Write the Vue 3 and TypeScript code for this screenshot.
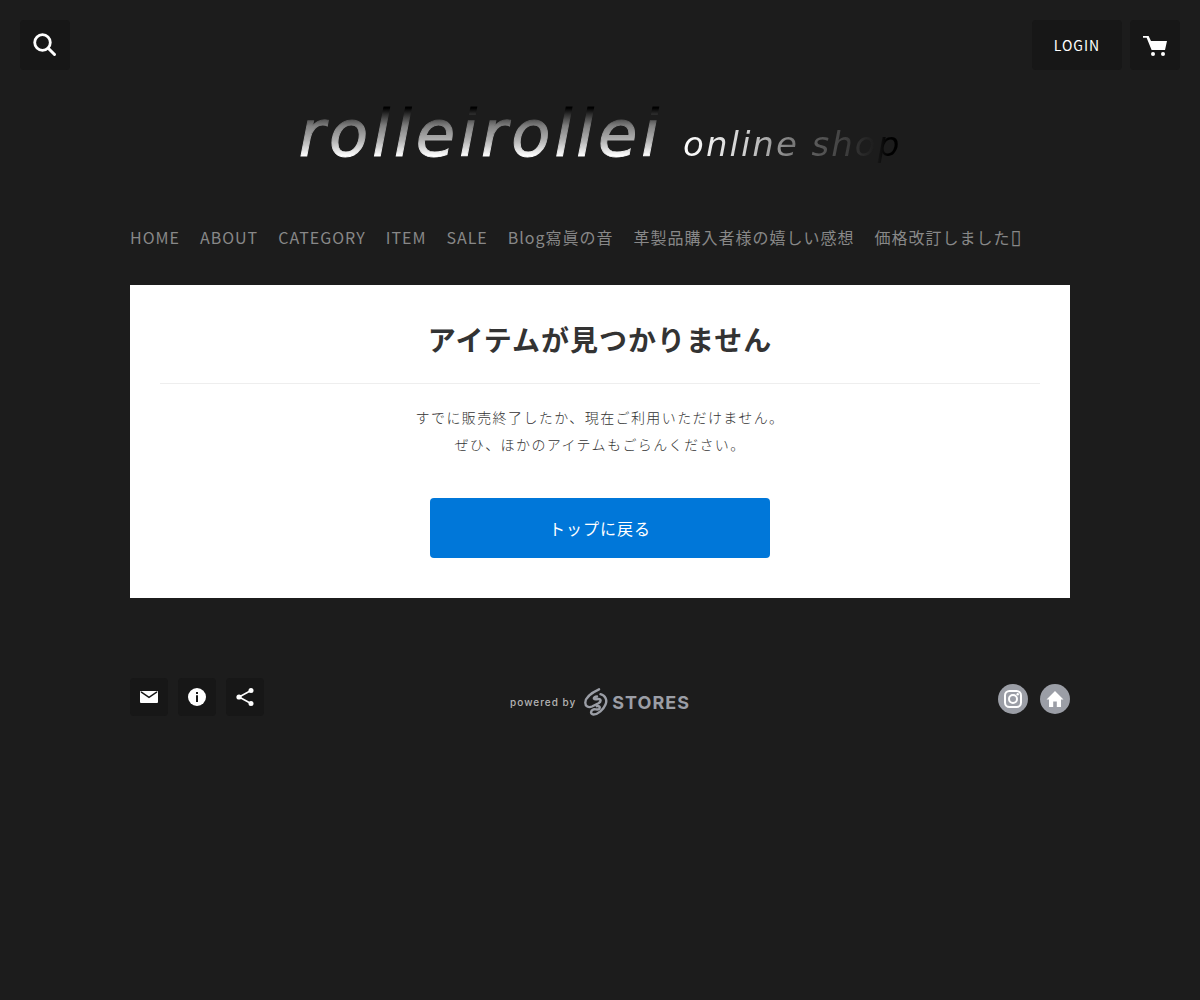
<script setup lang="ts">
interface NavItem {
  label: string
  href: string
  mark?: string
}

const navItems: NavItem[] = [
  { label: 'HOME', href: '#home' },
  { label: 'ABOUT', href: '#about' },
  { label: 'CATEGORY', href: '#category' },
  { label: 'ITEM', href: '#item' },
  { label: 'SALE', href: '#sale' },
  { label: 'Blog寫眞の音', href: '#blog' },
  { label: '革製品購入者様の嬉しい感想', href: '#voice' },
  { label: '価格改訂しました', href: '#price', mark: '▯' },
]
</script>

<template>
  <div class="page">
    <header class="toolbar">
      <button class="tile" type="button" aria-label="検索">
        <svg width="24" height="24" viewBox="0 0 24 24" fill="none" stroke="#fff" aria-hidden="true">
          <circle cx="9.5" cy="9.5" r="7.8" stroke-width="2.8" />
          <path d="M15.5 15.500L21.500 21.500" stroke-width="3" stroke-linecap="round" />
        </svg>
      </button>
      <div class="toolbar-right">
        <button class="tile login" type="button">LOGIN</button>
        <button class="tile" type="button" aria-label="カート">
          <svg width="24" height="22" viewBox="0 0 24 22" fill="#fff" aria-hidden="true">
            <path d="M0 2h5.600L8 7h16l-2 9H8.600L3.600 3.800H0z" />
            <circle cx="10" cy="20" r="2" />
            <circle cx="20" cy="20" r="2" />
          </svg>
        </button>
      </div>
    </header>

    <div class="container">
      <h1 class="brand">
        <a href="#home"><span class="brand-name">rolleirollei</span><span class="brand-sub">online shop</span></a>
      </h1>

      <nav class="nav">
        <a v-for="item in navItems" :key="item.href" :href="item.href">{{ item.label }}<span v-if="item.mark" class="mark">{{ item.mark }}</span></a>
      </nav>

      <main class="card">
        <h2>アイテムが見つかりません</h2>
        <p>すでに販売終了したか、現在ご利用いただけません。<br>ぜひ、ほかのアイテムもごらんください。</p>
        <button class="back" type="button">トップに戻る</button>
      </main>

      <footer class="footer">
        <div class="tools">
          <button class="tile small" type="button" aria-label="お問い合わせ">
            <svg width="18" height="12" viewBox="0 0 18 12" aria-hidden="true">
              <rect width="18" height="12" rx="1" fill="#fff" />
              <path d="M1 0.800L9 6.300L17 0.800" fill="none" stroke="#171717" stroke-width="1.400" />
            </svg>
          </button>
          <button class="tile small" type="button" aria-label="ショップ情報">
            <svg width="18" height="18" viewBox="0 0 18 18" aria-hidden="true">
              <circle cx="9" cy="9" r="9" fill="#fff" />
              <path d="M8 4h2v2H8zM8 7.300h2V14H8z" fill="#171717" />
            </svg>
          </button>
          <button class="tile small" type="button" aria-label="共有">
            <svg width="18" height="18" viewBox="0 0 18 18" fill="#fff" stroke="#fff" aria-hidden="true">
              <path d="M15 2.500L3 9L15 15.500" fill="none" stroke-width="1.600" />
              <circle cx="15" cy="2.500" r="2.500" stroke="none" />
              <circle cx="3" cy="9" r="2.600" stroke="none" />
              <circle cx="15" cy="15.500" r="2.500" stroke="none" />
            </svg>
          </button>
        </div>

        <a class="powered" href="#stores">
          <span class="powered-by">powered by</span>
          <svg width="24" height="28" viewBox="0 0 24 28" fill="none" stroke="#9b9ea6" stroke-width="2.400" stroke-linecap="round" stroke-linejoin="round" aria-hidden="true">
            <path d="M15 1.300C8 4.500 1.500 9.500 1.300 14.500C1.200 18.500 4.500 20 8 18.500L14.500 15.200C17.500 13.500 17 11 14.500 11C12.500 11 11 12 10 10.800C9.500 9.500 11 8.500 13 8.500" />
            <path d="M16.500 6.200C21.500 7.500 23.500 12 21.500 16.500C19.500 21.500 14 26.500 9.500 26.500C6 26 6.500 22.500 9.500 21.300C11.500 20.800 13.500 22.500 15.200 20.800C16.500 19 15 17.500 12.800 18.200" />
          </svg>
          <span class="stores">STORES</span>
        </a>

        <div class="social">
          <a href="#instagram" aria-label="Instagram">
            <svg width="18" height="18" viewBox="0 0 18 18" fill="none" stroke="#fff" stroke-width="2" aria-hidden="true">
              <rect x="1" y="1" width="16" height="16" rx="4.500" />
              <circle cx="9" cy="9" r="4" />
              <circle cx="13.700" cy="4.300" r="1.200" fill="#fff" stroke="none" />
            </svg>
          </a>
          <a href="#website" aria-label="ウェブサイト">
            <svg width="18" height="18" viewBox="0 0 18 18" fill="#fff" aria-hidden="true">
              <path d="M9 1L17.500 9.500H15V17H10.800V11.500H7.200V17H3V9.500H.5z" />
            </svg>
          </a>
        </div>
      </footer>
    </div>
  </div>
</template>

<style>
body {
  background: #1c1c1c;
}
</style>

<style scoped>
.page {
  font-family: "Noto Sans CJK JP", sans-serif;
  font-size: 16px;
  letter-spacing: 1px;
  color: #333;
}

a {
  color: inherit;
  text-decoration: none;
}

button {
  border: 0;
  padding: 0;
  font: inherit;
  letter-spacing: inherit;
  cursor: pointer;
}

.toolbar {
  display: flex;
  justify-content: space-between;
  padding: 20px 20px 0;
}

.toolbar-right {
  display: flex;
  gap: 8px;
}

.tile {
  display: flex;
  align-items: center;
  justify-content: center;
  width: 50px;
  height: 50px;
  border-radius: 4px;
  background: #171717;
  color: #fff;
}

.tile.login {
  width: 90px;
  font-size: 14px;
}

.tile.small {
  width: 38px;
  height: 38px;
}

.container {
  max-width: 940px;
  margin: 0 auto;
  padding: 0 20px;
}

.brand {
  margin: 24px 0 0;
  font-family: "DejaVu Sans", sans-serif;
  font-weight: 400;
  font-style: italic;
  line-height: 80px;
  text-align: center;
}

.brand a {
  display: inline-flex;
  align-items: baseline;
  gap: 20px;
}

.brand-name,
.brand-sub {
  background-clip: text;
  -webkit-background-clip: text;
  color: transparent;
}

.brand-name {
  font-size: 64px;
  letter-spacing: 4px;
  -webkit-text-stroke: 1px transparent;
  background-image: linear-gradient(to bottom, #000 14px, #3a3a3a 22px, #808080 32px, #b0b0b0 46px, #fff 62px);
}

.brand-sub {
  font-size: 34px;
  letter-spacing: 2px;
  background-image: linear-gradient(to right, #fff 0, #ccc 30%, #666 55%, #444 72%, #1c1c1c 88%, #000 94%);
}

.nav {
  display: flex;
  flex-wrap: wrap;
  gap: 20px;
  margin-top: 40px;
  line-height: 24px;
  color: #888;
}

.mark {
  font-family: "DejaVu Sans", sans-serif;
  font-size: 20px;
  line-height: 1px;
}

.card {
  display: flex;
  flex-direction: column;
  align-items: center;
  margin-top: 36px;
  padding: 30px 30px 40px;
  background: #fff;
}

.card h2 {
  align-self: stretch;
  margin: 0;
  padding: 4px 0 24px;
  border-bottom: 1px solid #eee;
  font-size: 28px;
  line-height: 40px;
  text-align: center;
}

.card p {
  margin: 20px 0 40px;
  font-size: 14px;
  font-weight: 300;
  letter-spacing: 0.1em;
  line-height: 27px;
  text-align: center;
}

.back {
  width: 340px;
  max-width: 100%;
  height: 60px;
  border-radius: 4px;
  background: #0077d9;
  color: #fff;
}

.footer {
  display: grid;
  grid-template-columns: 1fr auto 1fr;
  align-items: center;
  padding: 80px 0 40px;
}

.tools {
  display: flex;
  gap: 10px;
}

.powered {
  display: flex;
  align-items: center;
  gap: 4px;
  padding-top: 10px;
  color: #9b9ea6;
}

.powered-by {
  margin-right: 4px;
  font-family: Inter, sans-serif;
  font-size: 10px;
  font-weight: 500;
  color: #b4b4b4;
}

.stores {
  font-family: Inter, sans-serif;
  font-size: 18px;
  font-weight: 700;
}

.social {
  display: flex;
  justify-content: flex-end;
  gap: 12px;
  padding-top: 4px;
}

.social a {
  display: flex;
  align-items: center;
  justify-content: center;
  width: 30px;
  height: 30px;
  border-radius: 50%;
  background: #9b9ea6;
}
</style>
